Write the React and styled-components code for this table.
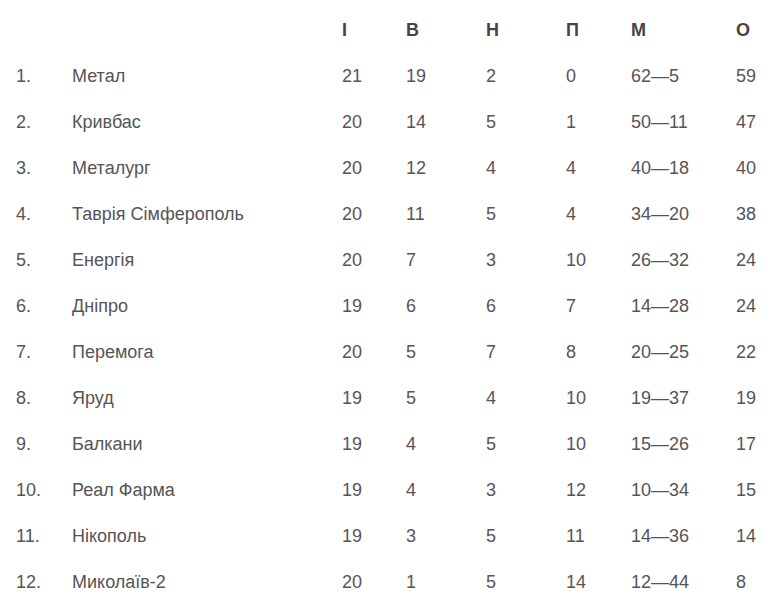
import React from 'react';
import styled, { createGlobalStyle } from 'styled-components';

const GlobalStyle = createGlobalStyle`
    body {
        margin:0;
        background:#fff;
        font-family:"Liberation Sans", Arial, sans-serif;
    }
`

const headers = ['І', 'В', 'Н', 'П', 'М', 'О'];

const teams = [
    ['1.', 'Метал', 21, 19, 2, 0, '62—5', 59],
    ['2.', 'Кривбас', 20, 14, 5, 1, '50—11', 47],
    ['3.', 'Металург', 20, 12, 4, 4, '40—18', 40],
    ['4.', 'Таврія Сімферополь', 20, 11, 5, 4, '34—20', 38],
    ['5.', 'Енергія', 20, 7, 3, 10, '26—32', 24],
    ['6.', 'Дніпро', 19, 6, 6, 7, '14—28', 24],
    ['7.', 'Перемога', 20, 5, 7, 8, '20—25', 22],
    ['8.', 'Яруд', 19, 5, 4, 10, '19—37', 19],
    ['9.', 'Балкани', 19, 4, 5, 10, '15—26', 17],
    ['10.', 'Реал Фарма', 19, 4, 3, 12, '10—34', 15],
    ['11.', 'Нікополь', 19, 3, 5, 11, '14—36', 14],
    ['12.', 'Миколаїв-2', 20, 1, 5, 14, '12—44', 8],
];

const App = () => {
    return (
        <Table>
            <GlobalStyle />
            <Row>
                <Cell />
                <Cell />
                {headers.map(h => <HeadCell key={h}>{h}</HeadCell>)}
            </Row>
            {teams.map(t => (
                <Row key={t[0]}>
                    {t.map((v, i) => <Cell key={i}>{v}</Cell>)}
                </Row>
            ))}
        </Table>
    )
}

export default App;


const Table = styled.div`
    display:flex;
    flex-direction:column;
    padding:7px 0 0 16px;
    width:762px;
`

const Row = styled.div`
    display:grid;
    grid-template-columns:56px 270px 64px 80px 80px 65px 105px 1fr;
    align-items:center;
    height:46px;
`

const Cell = styled.div`
    font-size:18px;
    line-height:22px;
    color:#555;
    white-space:nowrap;
`

const HeadCell = styled.div`
    font-size:18px;
    line-height:22px;
    font-weight:bold;
    color:#444;
`
